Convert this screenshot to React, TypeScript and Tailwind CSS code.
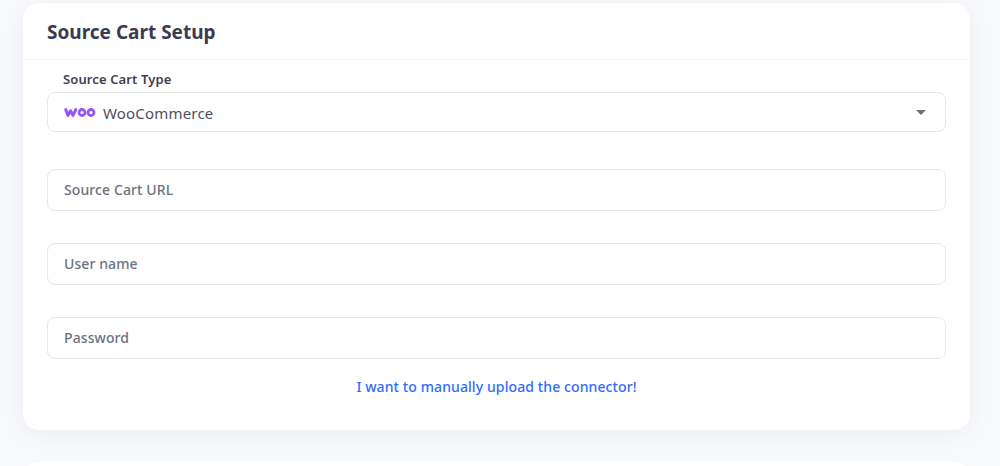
const fields = ['Source Cart URL', 'User name', 'Password'];

function WooLogo() {
  return (
    <svg width="32" height="11" viewBox="0 0 32 11" fill="none" stroke="#9655f5" className="shrink-0">
      <path d="M1.8 2.6 L4 8.4 L6.6 3.8 L9 8.4 L11.8 2.6" strokeWidth="3" strokeLinejoin="round" strokeLinecap="round" />
      <circle cx="18" cy="5.5" r="3" strokeWidth="2.8" />
      <circle cx="27" cy="5.5" r="3" strokeWidth="2.8" />
    </svg>
  );
}

export default function App() {
  return (
    <div className="h-[466px] overflow-hidden bg-[#f8f9fb] pl-[23px] pr-[30px] pt-[3px] font-['Noto_Sans',sans-serif]">
      <div className="h-[427px] rounded-2xl bg-white shadow-[0_4px_24px_rgba(30,40,70,0.05)]">
        <header className="flex h-[57px] items-center border-b border-[#f3f4f6] px-6 pt-[2px]">
          <h1 className="text-[19px] font-bold text-[#3b3a52]">Source Cart Setup</h1>
        </header>

        <div className="px-6">
          <label className="mt-[10px] block pl-4 text-[13px] font-semibold leading-[18px] tracking-[0.12px] text-[#3f3f50]">
            Source Cart Type
          </label>
          <div className="mt-[4px] flex h-10 items-center rounded-lg border border-[#e5e7eb] pl-4 pr-[19px]">
            <WooLogo />
            <span className="ml-[7px] pt-[2px] text-[15px] tracking-[0.18px] text-[#50505e]">WooCommerce</span>
            <span className="ml-auto h-0 w-0 border-x-[5px] border-t-[5px] border-x-transparent border-t-[#6b7280]" />
          </div>

          <div className="mt-[37px] flex flex-col gap-8">
            {fields.map((field) => (
              <div key={field} className="flex h-[42px] items-center rounded-lg border border-[#e5e7eb] px-4 text-sm font-medium tracking-[0.1px] text-[#6b7280]">
                {field}
              </div>
            ))}
          </div>

          <div className="mt-[18px] text-center text-sm font-medium leading-5 tracking-[0.1px] text-[#2f6bff]">
            I want to manually upload the connector!
          </div>
        </div>
      </div>
      <div className="mt-8 h-10 rounded-2xl bg-white" />
    </div>
  );
}
